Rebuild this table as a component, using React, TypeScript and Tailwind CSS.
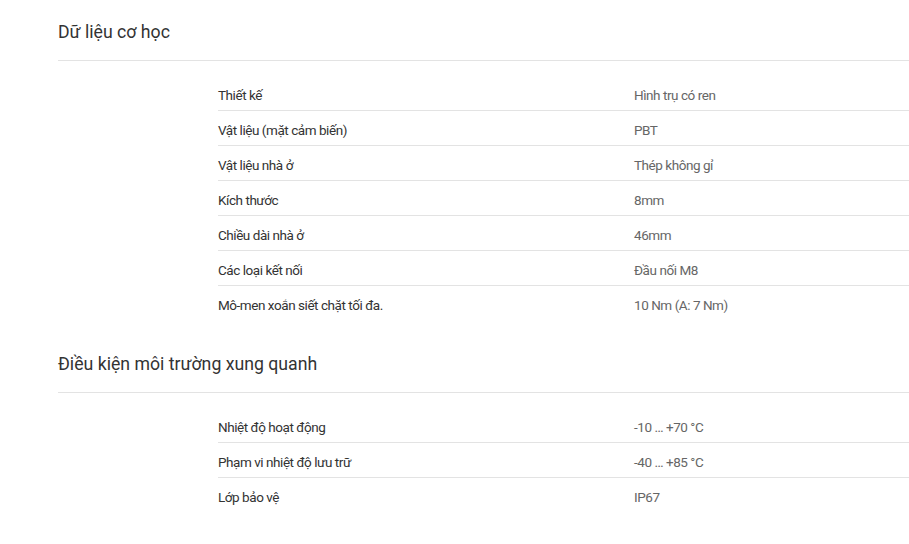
import React from 'react'

const sections = [
  {
    title: 'Dữ liệu cơ học',
    rows: [
      ['Thiết kế', 'Hình trụ có ren'],
      ['Vật liệu (mặt cảm biến)', 'PBT'],
      ['Vật liệu nhà ở', 'Thép không gỉ'],
      ['Kích thước', '8mm'],
      ['Chiều dài nhà ở', '46mm'],
      ['Các loại kết nối', 'Đầu nối M8'],
      ['Mô-men xoắn siết chặt tối đa.', '10 Nm (A: 7 Nm)'],
    ],
  },
  {
    title: 'Điều kiện môi trường xung quanh',
    rows: [
      ['Nhiệt độ hoạt động', '-10 … +70 °C'],
      ['Phạm vi nhiệt độ lưu trữ', '-40 … +85 °C'],
      ['Lớp bảo vệ', 'IP67'],
    ],
  },
]

export default function App() {
  return (
    <div className="min-h-screen bg-white pl-[58px] pt-[19px] font-['Roboto',sans-serif]">
      {sections.map(section => (
        <div key={section.title} className="mb-[30px]">
          <h2 className="text-[17.7px] leading-[26px] text-[#333] pb-[15px] border-b border-[#e3e3e3]">
            {section.title}
          </h2>
          <div className="ml-[160px] pt-[15px]">
            {section.rows.map(([label, value], i) => (
              <div
                key={label}
                className={`flex h-[35px] items-center pt-[4px] text-[13.5px] tracking-[-0.45px] ${
                  i < section.rows.length - 1 ? 'border-b border-[#e3e3e3]' : ''
                }`}
              >
                <div className="w-[416px] text-[#333]">{label}</div>
                <div className="text-[#666]">{value}</div>
              </div>
            ))}
          </div>
        </div>
      ))}
    </div>
  )
}
